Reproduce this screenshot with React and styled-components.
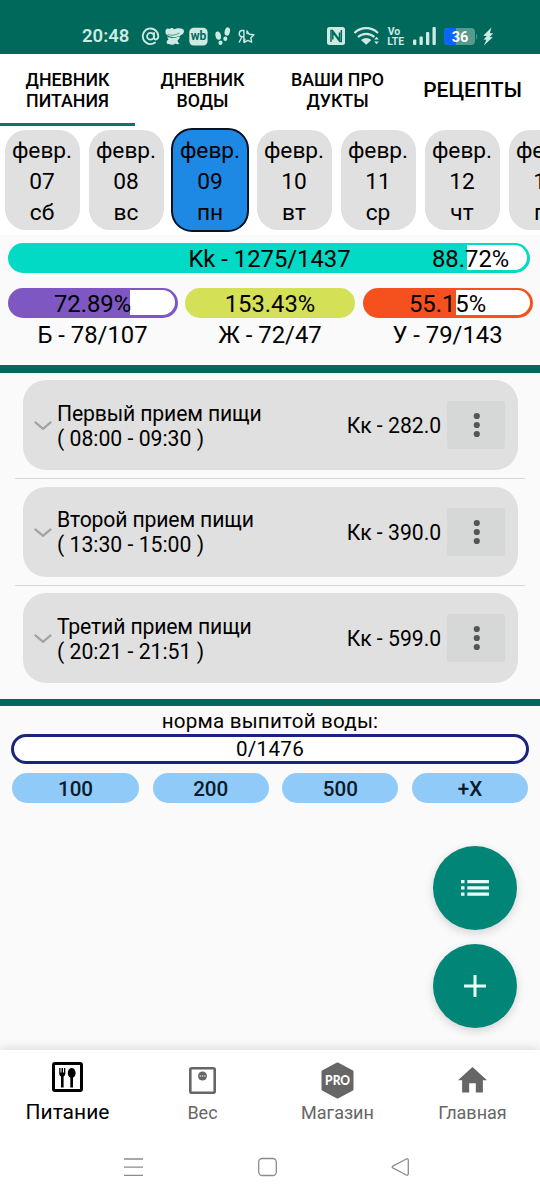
import React, { useState } from 'react';
import styled, { createGlobalStyle } from 'styled-components';

const GlobalStyle = createGlobalStyle`
  * {
    box-sizing: border-box;
  }

  body {
    margin: 0;
    background-color: #fafafa;
    font-family: Roboto, 'Noto Sans', sans-serif;
    color: #000;
  }

  button {
    font-family: inherit;
    color: inherit;
    border: none;
    padding: 0;
    cursor: pointer;
  }

  svg {
    display: block;
    flex: none;
  }
`;

const Screen = styled.div`
  display: flex;
  flex-direction: column;
  width: 540px;
  height: 1200px;
  overflow: hidden;
  background-color: #fafafa;
`;

const StatusBar = styled.header`
  display: flex;
  align-items: center;
  justify-content: space-between;
  height: 53.5px;
  padding: 19px 45px 0 82px;
  background-color: #00695c;
  color: #cfe9e3;
`;

const StatusGroup = styled.div`
  display: flex;
  align-items: center;
  gap: 4px;
`;

const Clock = styled.span`
  width: 54px;
  font-size: 18.5px;
  font-weight: 600;
  line-height: 20px;
`;

const Tabs = styled.nav`
  display: flex;
  height: 72px;
  background-color: #fff;
`;

const Tab = styled.button`
  width: 135px;
  padding-top: 4px;
  background: none;
  border-bottom: 3px solid ${props => (props.$active ? '#00796b' : 'transparent')};
  font-size: ${props => (props.$large ? 21 : 17.8)}px;
  font-weight: 500;
  line-height: 21px;
  white-space: pre-line;
`;

const Days = styled.div`
  display: flex;
  align-items: center;
  gap: 9px;
  height: 109.5px;
  padding-left: 4.5px;
  overflow: hidden;
  background-color: #fff;
`;

const Day = styled.button`
  flex: none;
  width: ${props => (props.$selected ? 78 : 75)}px;
  height: ${props => (props.$selected ? 104 : 100)}px;
  margin: 0 ${props => (props.$selected ? -1.5 : 0)}px;
  padding-top: 4px;
  border: ${props => (props.$selected ? '2px solid #06121f' : 'none')};
  border-radius: 21px;
  background-color: ${props => (props.$selected ? '#1e88e5' : '#e0e0e0')};
  font-size: 22.7px;
  line-height: 30.6px;
  white-space: pre-line;
`;

const Summary = styled.section`
  display: flex;
  flex-direction: column;
  gap: 15px;
  height: 130px;
  padding: 7.5px 7.5px 0;
`;

const Macros = styled.div`
  display: flex;
  gap: 7.5px;
`;

const Macro = styled.div`
  width: 170px;
  text-align: center;
`;

const MacroLabel = styled.div`
  font-size: 23.8px;
  line-height: 34px;
`;

const Bar = styled.div`
  width: ${props => props.$width}px;
  height: 30px;
  padding: 2.5px;
  border-radius: 15px;
  background-color: ${props => props.color};
`;

const Track = styled.div`
  display: flex;
  justify-content: flex-end;
  height: 25px;
  border-radius: 12.5px;
  overflow: hidden;
`;

// the unfilled part, the bar itself shows through on the left
const Rest = styled.div`
  height: 25px;
  background-color: #fff;
`;

const BarText = styled.div`
  display: grid;
  grid-template-columns: ${props => (props.$split ? '1fr 95px' : '1fr')};
  height: 30px;
  margin-top: -26.5px;
  padding-left: ${props => (props.$split ? 97 : 0)}px;
  font-size: 23.8px;
  line-height: 31.5px;
  text-align: center;

  span:last-child {
    text-align: ${props => (props.$split ? 'left' : 'center')};
  }
`;

const Divider = styled.div`
  flex: none;
  height: 7.5px;
  background-color: #00695c;
`;

const Meals = styled.section`
  height: 326px;
  padding: 7.5px 15px 0;
`;

const MealItem = styled.div`
  height: 106.5px;
  padding: 0 7.5px;
`;

const MealCard = styled.div`
  display: flex;
  align-items: center;
  height: 90px;
  padding: 0 12.3px 0 11.5px;
  border-radius: 23px;
  background-color: #e0e0e0;
  font-size: 21.2px;
`;

const MealLine = styled.div`
  height: 1px;
  margin: 8px -7.5px 0;
  background-color: #d8d8d8;
`;

const MealTitle = styled.div`
  flex: 1;
  margin-left: 5px;
  padding-top: 3px;
  line-height: 24.6px;
`;

const MealName = styled.div`
  letter-spacing: -0.15px;
`;

const MealEnergy = styled.div`
  margin-right: 5.5px;
  padding-top: 1px;
`;

const MoreButton = styled.button`
  display: flex;
  align-items: center;
  justify-content: center;
  width: 58.5px;
  height: 48px;
  border-radius: 2px;
  background-color: #d6d8d7;
`;

const Water = styled.section`
  flex: 1;
  padding: 0 11px;
`;

const WaterTitle = styled.div`
  padding-top: 4px;
  font-size: 20.6px;
  line-height: 23.5px;
  letter-spacing: 0.2px;
  text-align: center;
`;

const WaterBar = styled.div`
  height: 30px;
  border: 3px solid #1a237e;
  border-radius: 15px;
  background-color: #fff;
  font-size: 20.6px;
  line-height: 25px;
  letter-spacing: 0.3px;
  text-align: center;
`;

const WaterButtons = styled.div`
  display: grid;
  grid-template-columns: 127px 116px 116px 116px;
  gap: 13.7px;
  padding: 9.5px 1px 0;
`;

const WaterButton = styled.button`
  height: 30px;
  border-radius: 15px;
  background-color: #90caf9;
  color: #0b1a26;
  font-size: 20.6px;
  font-weight: 500;
  line-height: 32px;
`;

const Fabs = styled.div`
  display: flex;
  flex-direction: column;
  align-items: flex-end;
  gap: 13.5px;
  padding: 43px 11.7px 0 0;
`;

const Fab = styled.button`
  display: flex;
  align-items: center;
  justify-content: center;
  width: 84px;
  height: 84px;
  border-radius: 50%;
  background-color: #008577;
  box-shadow: 0 3px 10px rgba(0, 0, 0, 0.16);
`;

const BottomNav = styled.nav`
  display: grid;
  grid-template-columns: repeat(4, 135px);
  height: 84px;
  background-color: #fff;
  box-shadow: 0 -1px 10px rgba(0, 0, 0, 0.14);
`;

const NavItem = styled.button`
  display: flex;
  flex-direction: column;
  align-items: center;
  padding-top: ${props => (props.$active ? 8 : 11)}px;
  background: none;
  color: ${props => (props.$active ? '#000' : '#666')};
  font-size: ${props => (props.$active ? 21 : 18)}px;
  line-height: 24px;
`;

const NavIcon = styled.span`
  display: flex;
  align-items: center;
  height: 38px;
  margin-bottom: ${props => (props.$active ? 4 : 2)}px;
`;

const SystemNav = styled.footer`
  display: flex;
  justify-content: center;
  gap: 114.5px;
  height: 66px;
  padding: 23px 6px 0 0;
  background-color: #fff;
`;

const days = [
  { date: '07', name: 'сб' },
  { date: '08', name: 'вс' },
  { date: '09', name: 'пн' },
  { date: '10', name: 'вт' },
  { date: '11', name: 'ср' },
  { date: '12', name: 'чт' },
  { date: '13', name: 'пт' }
];

const tabs = ['ДНЕВНИК\nПИТАНИЯ', 'ДНЕВНИК\nВОДЫ', 'ВАШИ ПРО\nДУКТЫ', 'РЕЦЕПТЫ'];

const macros = [
  { color: '#7e57c2', percent: 72.89, label: 'Б - 78/107' },
  { color: '#d4e157', percent: 153.43, label: 'Ж - 72/47' },
  { color: '#f4511e', percent: 55.15, label: 'У - 79/143' }
];

const meals = [
  { title: 'Первый прием пищи', time: '08:00 - 09:30', energy: '282.0' },
  { title: 'Второй прием пищи', time: '13:30 - 15:00', energy: '390.0' },
  { title: 'Третий прием пищи', time: '20:21 - 21:51', energy: '599.0' }
];

const NotificationIcons = () => (
  <svg width="120" height="20" viewBox="140 26 120 20" fill="currentColor">
    {/* mail */}
    <g fill="none" stroke="currentColor" strokeWidth="1.8" strokeLinecap="round">
      <circle cx="150.5" cy="36.3" r="3.4" />
      <path d="M154 32.8v4.6c0 3.2 4.3 2.6 4.3-1.1a7.8 7.8 0 1 0-3.2 6.3" />
    </g>
    {/* crocodile */}
    <path d="M165.5 32.5c-.5-3.5 2-5 4-3.5 1.5-1.8 4-1.2 4.5.3 3-1.5 10-2 10 1.9 0 3-3.5 4.5-7 5.5-3.5 1-10.5.5-11.5-4.2z" />
    <path d="M167 36.5c2.5 1.5 6 1.8 9 1l3.5-1.2c.8 1.5-.5 3.2-2 4.2.3 1.5 1 2.5 2 3.3-1 .8-3 .5-4-.2-1.500 1.300-4.500 1.700-6.500.5-2 0-3-1.500-2-3.400l1.500-1.300z" />
    <path d="M167.5 34.4c4 1.6 8.5.5 12-1.4" fill="none" stroke="#00695c" strokeWidth="0.6" />
    {/* shop */}
    <rect x="189.3" y="27.8" width="18.3" height="17.7" rx="4.5" />
    <text x="198.5" y="40.3" fill="#00695c" fontSize="12" fontWeight="700" textAnchor="middle" fontFamily="Roboto">wb</text>
    {/* steps */}
    <ellipse cx="218.2" cy="35.6" rx="2.7" ry="4.2" transform="rotate(-14 218.2 35.6)" />
    <ellipse cx="220.5" cy="42.7" rx="2" ry="2.3" />
    <ellipse cx="227.3" cy="31.5" rx="2.6" ry="4.2" transform="rotate(14 227.3 31.5)" />
    <ellipse cx="225.3" cy="38.7" rx="2" ry="2.3" />
    {/* search */}
    <g fill="none" stroke="currentColor" strokeWidth="1.4">
      <path d="M243.9 42.5V30.5h-1.7c-3.8 0-4 6.3 0 6.3h1.7M242 36.8l-2.9 5.7" />
      <path d="M247 34.3v-3.3l2.3 3.3 4.5.5-3 3.2.9 4.2-3.9-1.8-3.5 2 .6-3.7" strokeLinejoin="round" />
    </g>
  </svg>
);

const SystemIcons = () => (
  <svg width="170" height="20" viewBox="325 26 170 20" fill="currentColor">
    {/* nfc */}
    <rect x="327" y="27" width="18" height="18" rx="2.5" />
    <path d="M331 42V30.5h1.5l7 9.5V32.5M341.3 30v11.5h-1.5l-7-9.5v7.5" fill="none" stroke="#00695c" strokeWidth="1.5" />
    {/* wifi */}
    <g fill="none" stroke="currentColor" strokeWidth="2.2">
      <path d="M354.4 33c6.8-6.4 16.8-6.4 23.6 0" />
      <path d="M358 37c4.8-4.3 11.6-4.3 16.4 0" />
    </g>
    <path d="M361 40c3-2.7 7.4-2.7 10.4 0l-5.2 4.8z" />
    <path d="M374.2 39.5l2.3-2.7 2.3 2.7zM374.2 41.5l2.3 2.7 2.3-2.7z" />
    {/* volte */}
    <g fontFamily="Roboto" fontWeight="700" fontSize="10.5">
      <text x="387.7" y="34.8">Vo</text>
      <text x="387.3" y="45" textLength="16.7" lengthAdjust="spacingAndGlyphs">LTE</text>
    </g>
    {/* signal */}
    <rect x="413" y="39.5" width="3.3" height="5.5" rx="1" />
    <rect x="419.5" y="36.5" width="3.3" height="8.5" rx="1" />
    <rect x="426" y="32" width="3.3" height="13" rx="1" />
    <rect x="432.5" y="27" width="3.3" height="18" rx="1" />
    {/* battery */}
    <rect x="444" y="28" width="31" height="17" rx="4" fill="#579b8e" />
    <path d="M476 33.5c1.5.6 1.5 5.4 0 6z" fill="#579b8e" />
    <path d="M448 28h8v17h-8a4 4 0 0 1-4-4v-9a4 4 0 0 1 4-4z" fill="#0a66f5" />
    <text x="460" y="41.6" fill="#fff" fontSize="14.5" fontWeight="700" textAnchor="middle" fontFamily="Roboto">36</text>
    <path d="M491.5 27.5l-8.3 8.3 3.6.3-3.2 3.3 2.8.4-2.6 5.7 9-8.2-3.2-.4 3.6-3.5-3.3-.3z" />
  </svg>
);

const ChevronIcon = () => (
  <svg width="18" height="12" viewBox="0 0 18 12" fill="none" stroke="#a3a3a3" strokeWidth="2.2">
    <path d="M0.8 2.9L9 9.9L17.2 2.9" />
  </svg>
);

const MoreIcon = () => (
  <svg width="8" height="26" viewBox="0 0 8 26" fill="#555">
    <circle cx="4.8" cy="4" r="3.1" />
    <circle cx="4.8" cy="13" r="3.1" />
    <circle cx="4.8" cy="22" r="3.1" />
  </svg>
);

const FoodIcon = () => (
  <svg width="31" height="30" viewBox="0 0 31 30">
    <rect x="1.5" y="1.5" width="28" height="27" rx="1.5" fill="none" stroke="currentColor" strokeWidth="3" />
    <path d="M7.2 6h1.3v4.5h1V6h1.5v4.5h1V6h1.3v5.5c0 1.5-.7 2.5-1.7 2.9V25.5H9V14.4c-1.1-.4-1.8-1.4-1.8-2.9z" fill="currentColor" />
    <ellipse cx="19.7" cy="11" rx="3.9" ry="5" fill="currentColor" />
    <path d="M18.3 14h2.7v11.5h-2.7z" fill="currentColor" />
  </svg>
);

const ScaleIcon = () => (
  <svg width="27" height="27" viewBox="0 0 27 27">
    <rect x="1.3" y="1.3" width="24.4" height="24.4" rx="1.5" fill="none" stroke="currentColor" strokeWidth="2.6" />
    <circle cx="13.5" cy="9" r="4.5" fill="currentColor" />
    <path d="M10.6 9h1.4M12.9 9h1.4M15.2 9h1.4" stroke="#fff" strokeWidth="1.2" />
  </svg>
);

const ProIcon = () => (
  <svg width="33" height="37" viewBox="0 0 33 37">
    <path d="M16.5 1.5L31.5 9.5V27.5L16.5 35.5L1.5 27.5V9.5Z" fill="currentColor" stroke="currentColor" strokeWidth="2" strokeLinejoin="round" />
    <text x="16.6" y="23" fill="#fff" fontSize="13" fontWeight="900" textAnchor="middle" fontFamily="Lato" textLength="25" lengthAdjust="spacingAndGlyphs">PRO</text>
  </svg>
);

const HomeIcon = () => (
  <svg width="29" height="26" viewBox="0 0 29 26">
    <path d="M14.5 0L29 13.3H24.9V25.5H17.8V16.3H11.2V25.5H4.1V13.3H0Z" fill="currentColor" />
  </svg>
);

const App = () => {
  const [activeTab, setActiveTab] = useState(0);
  const [selectedDay, setSelectedDay] = useState('09');

  return (
    <Screen>
      <GlobalStyle />

      <StatusBar>
        <StatusGroup>
          <Clock>20:48</Clock>
          <NotificationIcons />
        </StatusGroup>
        <SystemIcons />
      </StatusBar>

      <Tabs>
        {tabs.map((tab, i) => (
          <Tab key={tab} $active={activeTab === i} $large={!tab.includes('\n')} onClick={() => setActiveTab(i)}>
            {tab}
          </Tab>
        ))}
      </Tabs>

      <Days>
        {days.map(day => (
          <Day key={day.date} $selected={selectedDay === day.date} onClick={() => setSelectedDay(day.date)}>
            {`февр.\n${day.date}\n${day.name}`}
          </Day>
        ))}
      </Days>

      <Summary>
        <Bar $width={522} color="#03dac5">
          <Track>
            <Rest style={{ width: '11.6%' }} />
          </Track>
          <BarText $split>
            <span>Kk - 1275/1437</span>
            <span>88.72%</span>
          </BarText>
        </Bar>
        <Macros>
          {macros.map(macro => (
            <Macro key={macro.label}>
              <Bar $width={170} color={macro.color}>
                <Track>
                  <Rest style={{ width: `${Math.max(100 - macro.percent, 0)}%` }} />
                </Track>
                <BarText>
                  <span>{macro.percent}%</span>
                </BarText>
              </Bar>
              <MacroLabel>{macro.label}</MacroLabel>
            </Macro>
          ))}
        </Macros>
      </Summary>

      <Divider />

      <Meals>
        {meals.map((meal, i) => (
          <MealItem key={meal.time}>
            <MealCard>
              <ChevronIcon />
              <MealTitle>
                <MealName>{meal.title}</MealName>
                ( {meal.time} )
              </MealTitle>
              <MealEnergy>Кк - {meal.energy}</MealEnergy>
              <MoreButton>
                <MoreIcon />
              </MoreButton>
            </MealCard>
            {i < meals.length - 1 && <MealLine />}
          </MealItem>
        ))}
      </Meals>

      <Divider />

      <Water>
        <WaterTitle>норма выпитой воды:</WaterTitle>
        <WaterBar>0/1476</WaterBar>
        <WaterButtons>
          <WaterButton>100</WaterButton>
          <WaterButton>200</WaterButton>
          <WaterButton>500</WaterButton>
          <WaterButton>+X</WaterButton>
        </WaterButtons>
        <Fabs>
          <Fab>
            <svg width="28" height="16" viewBox="0 0 28 16" fill="#e8fffb">
              <path d="M0 0h3.5v3.2H0zM6.3 0H28v3.2H6.3zM0 6.3h3.5v3.2H0zM6.3 6.3H28v3.2H6.3zM0 12.6h3.5v3.2H0zM6.3 12.6H28v3.2H6.3z" />
            </svg>
          </Fab>
          <Fab>
            <svg width="22" height="22" viewBox="0 0 22 22" fill="#e8fffb">
              <path d="M9.5 0h3v9.5H22v3h-9.5V22h-3v-9.5H0v-3h9.5z" />
            </svg>
          </Fab>
        </Fabs>
      </Water>

      <BottomNav>
        <NavItem $active>
          <NavIcon $active><FoodIcon /></NavIcon>
          Питание
        </NavItem>
        <NavItem>
          <NavIcon><ScaleIcon /></NavIcon>
          Вес
        </NavItem>
        <NavItem>
          <NavIcon><ProIcon /></NavIcon>
          Магазин
        </NavItem>
        <NavItem>
          <NavIcon><HomeIcon /></NavIcon>
          Главная
        </NavItem>
      </BottomNav>

      <SystemNav>
        <svg width="19" height="20" viewBox="0 0 19 20" stroke="#8c8c8c" strokeWidth="1.3">
          <path d="M0 2h19M0 10.2h19M0 18.4h19" />
        </svg>
        <svg width="19" height="20" viewBox="0 0 19 20" fill="none" stroke="#8c8c8c" strokeWidth="1.3">
          <rect x="0.7" y="1.5" width="17.6" height="17" rx="3.5" />
        </svg>
        <svg width="19" height="20" viewBox="0 0 19 20" fill="none" stroke="#8c8c8c" strokeWidth="1.3" strokeLinejoin="round">
          <path d="M1.8 9.1L15.3 2c1.3-.6 2 0 2 1.2v13.6c0 1.2-.7 1.8-2 1.2L1.8 10.9c-.9-.5-.9-1.3 0-1.8z" />
        </svg>
      </SystemNav>
    </Screen>
  );
};

export default App;
